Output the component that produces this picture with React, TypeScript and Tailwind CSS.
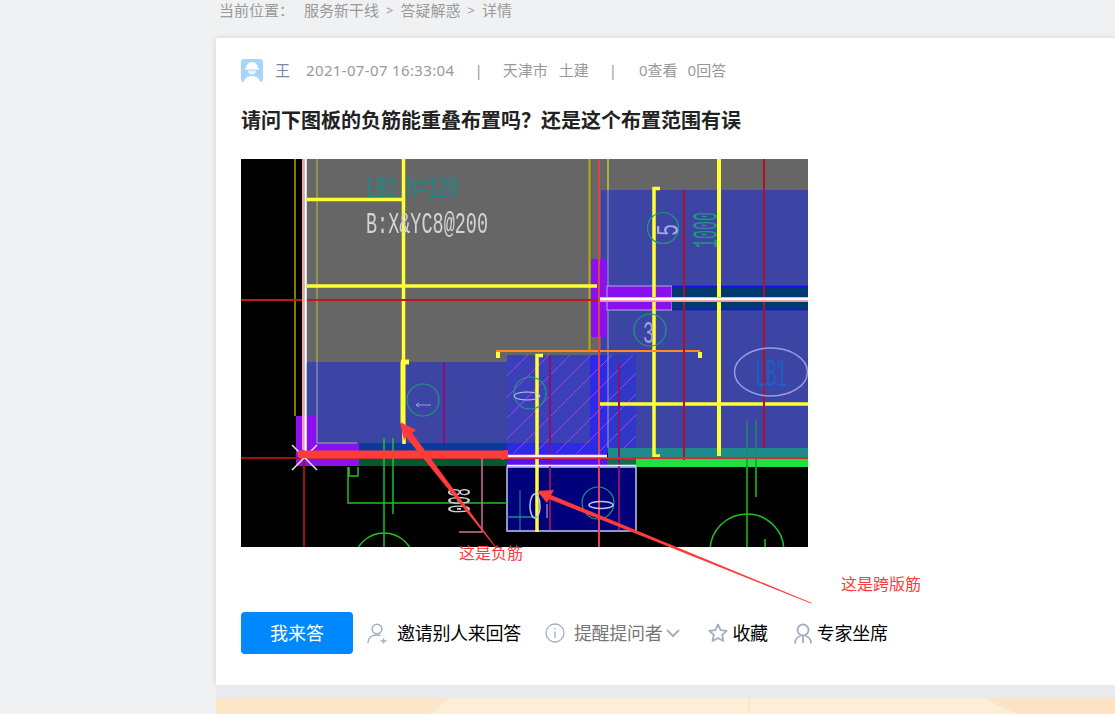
const cjk = "font-['Noto_Sans','Noto_Sans_CJK_SC',sans-serif]"

// full-width punctuation, the Latin font has no glyph so it falls to the CJK one
const fullColon = "\uFF1A"
const fullQuestion = "\uFF1F"

function CadPicture() {
    return (
        <svg viewBox="241 159 700 453" className="block w-[700px] h-[453px]">
            <defs>
                <clipPath id="pic"><rect x="241" y="159" width="567" height="388" /></clipPath>
                <pattern id="hatch" width="21" height="21" patternUnits="userSpaceOnUse" patternTransform="translate(507 355)">
                    <path d="M0 21L21 0" stroke="#a040f0" strokeWidth="1" />
                </pattern>
            </defs>
            <g clipPath="url(#pic)">
            <g fill="none" className="blur-[0.4px]">
                <rect x="241" y="159" width="567" height="388" fill="#000" />
                <rect x="305" y="159" width="503" height="204" fill="#666" />
                <rect x="601" y="190" width="207" height="258" fill="#3c44a4" />
                <rect x="307" y="362" width="200" height="82" fill="#3c44a4" />

                {/* hatched room */}
                <rect x="507" y="355" width="129" height="98" fill="#2a2ae8" />
                <rect x="507" y="355" width="83" height="88" fill="#3c40b8" />
                <rect x="608" y="355" width="28" height="98" fill="#3038c8" />
                <rect x="507" y="355" width="129" height="98" fill="url(#hatch)" />

                {/* lower bands */}
                <rect x="296" y="416" width="21" height="50" fill="#8a10f0" />
                <rect x="317" y="443" width="42" height="23" fill="#8a10f0" />
                <rect x="359" y="443" width="148" height="12" fill="#0a3a9a" />
                <rect x="359" y="455" width="148" height="11" fill="#005a30" />
                <rect x="507" y="453" width="100" height="14" fill="#5a10f0" />
                <rect x="608" y="448" width="200" height="9" fill="#1f8a8a" />
                <rect x="607" y="457" width="29" height="9" fill="#1a6a50" />
                <rect x="636" y="459" width="172" height="8" fill="#1fe040" />
                <rect x="507" y="467" width="129" height="64" fill="#00007a" stroke="#c0c8f0" strokeWidth="1.5" />

                {/* wall on the right */}
                <rect x="591" y="259" width="16" height="78" fill="#8a10f0" />
                <rect x="607" y="286" width="65" height="24" fill="#8a10f0" stroke="#b0a8e0" strokeWidth="1" />
                <rect x="672" y="286" width="136" height="24" fill="#003a70" />
                <path d="M672 286.500H808M672 309.500H808" stroke="#1010e0" strokeWidth="1.500" />
                <path d="M608 190V286M608 310V448" stroke="#a0a0c8" strokeWidth="1" />
                <path d="M317 362V443H357" stroke="#a8a8b8" strokeWidth="1" />

                {/* olive and yellow verticals */}
                <path d="M295 159V416" stroke="#a8a800" strokeWidth="1.500" />
                <path d="M589.500 159V350" stroke="#b0b000" strokeWidth="2" />
                <path d="M608 159V190" stroke="#c8c840" strokeWidth="1.500" />
                <path d="M317 159V362" stroke="#c0c030" strokeWidth="1" />

                {/* rebar */}
                <g stroke="#ffff33" strokeWidth="3.500">
                    <path d="M307 199.500H404M307 286H597" />
                    <path d="M403.500 159V362M404 424V444" />
                    <path d="M660 188.500H654V456H660" />
                    <path d="M719 159V456" strokeWidth="4" />
                    <path d="M600 404H808" />
                    <path d="M543 355.500H537V532" />
                    <path d="M498 358V352M700 358V352" strokeWidth="4" />
                </g>
                <path d="M401 362H409M403 362V424" stroke="#ffff33" strokeWidth="5" />
                <path d="M496 351H700" stroke="#ff8a20" strokeWidth="2" />

                {/* red lines */}
                <g stroke="#b01030" strokeWidth="2">
                    <path d="M241 300H600" stroke="#c01818" />
                    <path d="M684 190V460M764 159V448" />
                    <path d="M444 362V443M550 355V530M619 362V530" stroke="#8a1070" />
                    <path d="M599 159V547" stroke="#e04050" />
                    <path d="M241 458H300M304 458V547" stroke="#a01010" />
                    <path d="M300 458H808" stroke="#d03030" />
                </g>

                {/* white wall lines */}
                <path d="M303 159V450" stroke="#f0a0a8" strokeWidth="2" />
                <path d="M305.500 159V457" stroke="#fff" strokeWidth="2.500" />
                <path d="M600 299.500H808" stroke="#f09090" strokeWidth="5" />
                <path d="M600 299H808" stroke="#fff" strokeWidth="2.500" />
                <path d="M507 456H607" stroke="#f4f0ff" strokeWidth="2.500" />
                <path d="M507 465.500H636" stroke="#f0f0ff" strokeWidth="1.500" />
                <path d="M292 445L317 470M317 445L292 470" stroke="#e8e8f0" strokeWidth="1.500" />

                {/* green linework */}
                <g stroke="#20c020" strokeWidth="1.500">
                    <path d="M348 467V503H507M349 467V476H358V467" />
                    <path d="M384 438V547M393 438V514" />
                    <circle cx="384" cy="563" r="30" />
                    <path d="M747 420V467M756 420V467" stroke="#1e8a60" />
                    <path d="M747 467V547M756 467V497" />
                    <circle cx="747" cy="551" r="37" />
                    <path d="M765 539V547" />
                </g>
                <path d="M482 458V532H459" stroke="#d070a0" strokeWidth="1.500" />
                <path d="M507 517H538" stroke="#1e8a80" strokeWidth="1.500" />
                <path d="M520 490V530" stroke="#2090a0" strokeWidth="1" />

                {/* tags */}
                <g stroke="#1e9a78" strokeWidth="1.200">
                    <circle cx="663" cy="228" r="15.500" />
                    <circle cx="650" cy="330" r="16" />
                    <circle cx="423" cy="400" r="16" />
                    <circle cx="530" cy="393" r="16" />
                    <circle cx="598" cy="503" r="16" />
                </g>
                <ellipse cx="771" cy="372" rx="36.500" ry="24" stroke="#9a9ae8" strokeWidth="1.500" />
                <path d="M416 405H431M416 405L419 403M416 405L419 407" stroke="#9a9ae8" strokeWidth="1" />
                <ellipse cx="601" cy="505" rx="12" ry="3.500" stroke="#c0c8f0" strokeWidth="1.500" />
                <ellipse cx="527" cy="396" rx="13" ry="4" stroke="#c0c8f0" strokeWidth="1" />
                <ellipse cx="535" cy="506" rx="5" ry="12" stroke="#c0c8f0" strokeWidth="1.500" />
                <path d="M547 504V518" stroke="#c0c8f0" strokeWidth="1" />

                {/* labels */}
                <g fontFamily="'Liberation Mono', monospace">
                    <text x="366" y="197" fontSize="30" fill="#168c8c" textLength="92" lengthAdjust="spacingAndGlyphs">LB1 h=120</text>
                    <text x="366" y="233" fontSize="30" fill="#d4d4d4" textLength="122" lengthAdjust="spacingAndGlyphs">B:X&amp;YC8@200</text>
                    <text x="755" y="386" fontSize="38" fill="#1860c8" textLength="32" lengthAdjust="spacingAndGlyphs">LB1</text>
                    <text transform="translate(678 236) rotate(-90)" fontSize="32" fill="#a8a8e8" textLength="12" lengthAdjust="spacingAndGlyphs">5</text>
                    <text x="643" y="343" fontSize="32" fill="#a0a0e0" textLength="11" lengthAdjust="spacingAndGlyphs">3</text>
                    <text transform="translate(717 248) rotate(-90)" fontSize="36" fill="#1e9a78" textLength="36" lengthAdjust="spacingAndGlyphs">1000</text>
                    <text transform="translate(448 488) rotate(90)" fontSize="33" fill="#d0d0d8" textLength="25" lengthAdjust="spacingAndGlyphs">800</text>
                </g>
            </g>
            </g>

            {/* hand-drawn arrows, they run past the picture */}
            <g fill="#ff3b3b">
                <path d="M299 450.500H500L508 450V458L503 460L500 458H299Q296 454 299 450.500Z" />
                <path d="M400 422L416 430L412 433L496 547L495 547L406 437L404 440Z" />
                <path d="M537 491L554 490L551 495L812 603L811 603.500L549 499L547 503Z" />
            </g>
            <text x="459" y="559" fontSize="16" fill="#ff3b3b" fontFamily="'Noto Sans CJK SC', sans-serif">这是负筋</text>
            <text x="841" y="590" fontSize="16" fill="#ff3b3b" fontFamily="'Noto Sans CJK SC', sans-serif">这是跨版筋</text>
        </svg>
    )
}

function Avatar() {
    return (
        <svg viewBox="0 0 22 23" className="w-[22px] h-[23px]">
            <rect width="22" height="23" rx="3" fill="#a8d4fb" />
            <path d="M5 9a6 6 0 0 1 12 0h1v1.500H4V9z" fill="#fff" />
            <path d="M7 11.500h8c0 2.500-1.500 4-4 4s-4-1.500-4-4z" fill="#e8f4ff" />
            <path d="M3 23c.5-4 3.500-6 8-6s7.500 2 8 6z" fill="#fff" />
        </svg>
    )
}

export default function App() {
    return (
        <div className={`h-screen w-screen overflow-hidden bg-[#f0f1f3] pl-[216px] ${cjk}`}>

            <div className="flex h-[38px] items-start gap-[7px] pl-[3px] text-[15px] leading-[20px] text-[#999]">
                <span className="mr-[3px]">当前位置{fullColon}</span>
                <span>服务新干线</span>
                <span className="text-[13px]">&gt;</span>
                <span>答疑解惑</span>
                <span className="text-[13px]">&gt;</span>
                <span>详情</span>
            </div>

            <div className="h-[647px] rounded-tl-[2px] bg-white pl-[25px] pt-[21px] shadow-[0_0_6px_rgba(0,0,0,0.12)]">

                <div className="flex h-[23px] items-center text-[15px] text-[#999]">
                    <Avatar />
                    <span className="ml-[12px] text-[#7c86a8]">王</span>
                    <span className="ml-[16px] tracking-[0.35px]">2021-07-07 16:33:04</span>
                    <span className="ml-[20px]">|</span>
                    <span className="ml-[20px]">天津市</span>
                    <span className="ml-[11px]">土建</span>
                    <span className="ml-[20px]">|</span>
                    <span className="ml-[22px]">0查看</span>
                    <span className="ml-[10px]">0回答</span>
                </div>

                <h1 className="mt-[25px] h-[28px] text-[20px] font-bold leading-[28px] text-[#222]">
                    请问下图板的负筋能重叠布置吗{fullQuestion}还是这个布置范围有误
                </h1>

                <div className="mt-[24px]">
                    <CadPicture />
                </div>

                <div className="flex h-[42px] items-center text-[18px] tracking-[-0.3px] text-black">
                    <button className="h-[42px] w-[112px] rounded-[4px] bg-[#0089ff] tracking-normal text-white">我来答</button>

                    <svg viewBox="0 0 20 21" className="ml-[14px] h-[21px] w-[20px]" fill="none" stroke="#a4adc0" strokeWidth="1.500">
                        <circle cx="10" cy="6" r="4.800" />
                        <path d="M1 20c0-5 3.500-8 9-8 1.500 0 2.500.2 3.500.6M13.500 18h6M16.500 15.500v5" />
                    </svg>
                    <span className="ml-[10px]">邀请别人来回答</span>

                    <svg viewBox="0 0 20 20" className="ml-[24px] h-[20px] w-[20px]" fill="none" stroke="#a4adc0" strokeWidth="1.300">
                        <circle cx="10" cy="10" r="9" />
                        <path d="M10 8.500V15M10 5v1.500" />
                    </svg>
                    <span className="ml-[9px] text-[#777]">提醒提问者</span>
                    <svg viewBox="0 0 14 9" className="ml-[4px] h-[9px] w-[14px]" fill="none" stroke="#b0b0b0" strokeWidth="2">
                        <path d="M1 1l6 6 6-6" />
                    </svg>

                    <svg viewBox="0 0 20 20" className="ml-[28px] h-[20px] w-[20px]" fill="none" stroke="#a4adc0" strokeWidth="1.800" strokeLinejoin="round">
                        <path d="M10 1.500l2.600 5.600 6 .7-4.400 4.100 1.200 6.100-5.400-3-5.400 3 1.200-6.100L1.400 7.800l6-.7z" />
                    </svg>
                    <span className="ml-[4px]">收藏</span>

                    <svg viewBox="0 0 20 21" className="ml-[25px] h-[21px] w-[20px]" fill="none" stroke="#a4adc0" strokeWidth="1.800">
                        <circle cx="10" cy="7" r="5.500" />
                        <path d="M2 20.500c0-4 2-6.500 5.500-7.500M18 20.500c0-4-2-6.500-5.500-7.500M10 13v7" />
                    </svg>
                    <span className="ml-[4px]">专家坐席</span>
                </div>

            </div>

            <div className="h-[13px] bg-[#e9eaed]" />

            <div className="h-[16px] bg-[#fdeed8]">
                <svg viewBox="216 698 899 16" className="block h-[16px] w-[899px]">
                    <path d="M216 698H450L430 714H216Z" fill="#fde5c8" />
                    <path d="M987 698H1115V714H1019Q998 708 987 698Z" fill="#fde3c4" />
                    <path d="M749 698V714" stroke="#f6e0c0" />
                </svg>
            </div>

        </div>
    )
}
